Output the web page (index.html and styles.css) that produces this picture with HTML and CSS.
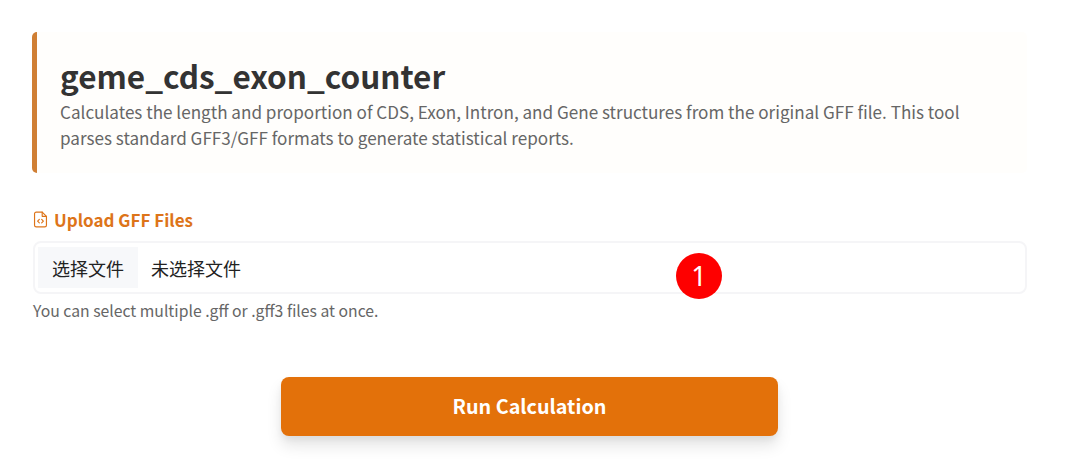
FILE: index.html
```html
<!DOCTYPE html>
<html lang="en">
<head>
<meta charset="utf-8">
<title>geme_cds_exon_counter</title>
<link rel="stylesheet" href="styles.css">
</head>
<body>
<main class="page">
  <header class="hero">
    <h1 class="hero-title">geme_cds_exon_counter</h1>
    <p class="hero-text">Calculates the length and proportion of CDS, Exon, Intron, and Gene structures from the original GFF file. This tool parses standard GFF3/GFF formats to generate statistical reports.</p>
  </header>
  <section class="upload">
    <label class="upload-label">
      <svg class="upload-icon" viewBox="0 0 16 16" fill="none" stroke="currentColor" stroke-width="1.1" stroke-linecap="round" stroke-linejoin="round"><path d="M9.6 1H4a1.6 1.6 0 0 0-1.6 1.6v10.8A1.6 1.6 0 0 0 4 15h8a1.6 1.6 0 0 0 1.6-1.6V5L9.6 1z"/><path d="M9.6 1v4h4"/><path d="M6.9 7.9 5.3 9.5l1.6 1.6M9.1 7.9l1.6 1.6-1.6 1.6"/></svg>
      <span>Upload GFF Files</span>
    </label>
    <div class="file-box">
      <span class="file-button">选择文件</span>
      <span class="file-name">未选择文件</span>
      <span class="badge">1</span>
    </div>
    <p class="hint">You can select multiple .gff or .gff3 files at once.</p>
  </section>
  <div class="actions">
    <button class="run" type="button">Run Calculation</button>
  </div>
</main>
</body>
</html>
```
FILE: styles.css
```css
* { box-sizing: border-box; }
html, body { margin: 0; height: 100%; }
body {
  background: #fff;
  font-family: "Noto Sans CJK SC", "Noto Sans", sans-serif;
  color: #333;
  overflow: hidden;
}
.page {
  padding: 32px 39px 0 32px;
}
.hero {
  height: 141px;
  padding: 22px 24px 0 23px;
  background: #fffefc;
  border-left: 5px solid #d07f34;
  border-radius: 5px;
}
.hero-title {
  margin: 0;
  font-size: 31.5px;
  line-height: 42px;
  font-weight: 700;
  color: #333;
}
.hero-text {
  margin: 3px 0 0;
  font-size: 17.1px;
  line-height: 26px;
  color: #666;
}
.upload {
  margin-top: 34px;
  padding-left: 1px;
}
.upload-label {
  display: flex;
  align-items: center;
  gap: 5px;
  height: 24px;
  margin-left: -1px;
  font-size: 17px;
  font-weight: 700;
  color: #dd7419;
}
.upload-icon {
  width: 17px;
  height: 17px;
  flex: none;
}
.file-box {
  position: relative;
  display: flex;
  align-items: center;
  height: 53px;
  margin-top: 10px;
  padding: 0 3px;
  border: 2px solid #f5f5f7;
  border-radius: 8px;
  background: #fff;
  font-size: 18px;
  line-height: 24px;
  color: #222;
}
.file-button {
  display: flex;
  align-items: center;
  justify-content: center;
  width: 100px;
  height: 41px;
  background: #f7f8fa;
}
.file-name {
  margin-left: 13px;
}
.badge {
  position: absolute;
  left: 641px;
  top: 10px;
  width: 46px;
  height: 46px;
  border-radius: 50%;
  background: #fe0000;
  color: #fff;
  display: flex;
  align-items: center;
  justify-content: center;
  font-family: "Noto Sans", sans-serif;
  font-size: 27px;
  font-weight: 400;
}
.hint {
  margin: 5px 0 0;
  font-size: 15.75px;
  line-height: 24px;
  color: #666;
}
.actions {
  display: flex;
  justify-content: center;
  margin-top: 54px;
}
.run {
  width: 497px;
  height: 59px;
  border: 0;
  border-radius: 8px;
  background: #e3710a;
  color: #fff;
  font-family: inherit;
  font-size: 19.75px;
  line-height: 24px;
  font-weight: 700;
  padding: 0 0 1px;
  box-shadow: 0 10px 15px rgba(0, 0, 0, 0.1), 0 4px 6px rgba(0, 0, 0, 0.05);
}
```
